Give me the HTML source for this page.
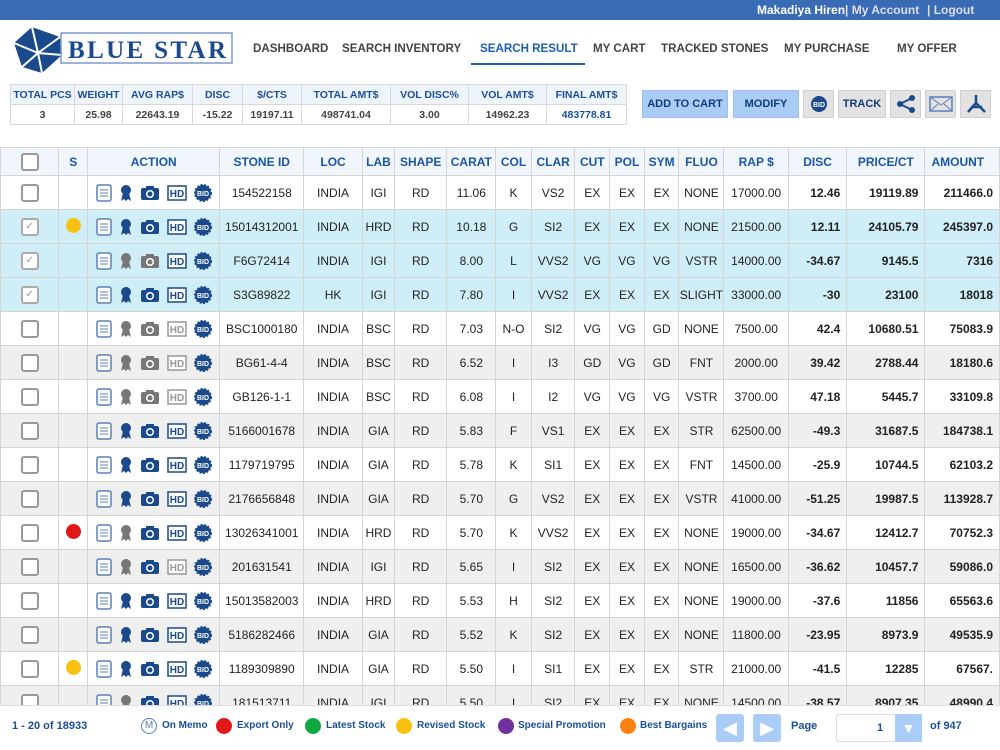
<!DOCTYPE html>
<html><head><meta charset="utf-8"><style>
*{box-sizing:border-box;margin:0;padding:0}
body{width:1000px;height:750px;overflow:hidden;background:#fff;font-family:"Liberation Sans",sans-serif;position:relative;color:#222}
.top{position:absolute;left:0;top:0;width:1000px;height:20px;background:#3a6bb5;color:#fff;font-size:12px;font-weight:bold}
.top span{position:absolute;top:3px}
.nav{position:absolute;top:42px;font-size:11.6px;font-weight:bold;color:#444}
.logo{position:absolute;left:12px;top:25px}
.sum{position:absolute;left:10px;top:84px;border-collapse:collapse;font-size:10.5px;font-weight:bold;table-layout:fixed}
.sum td{border:1px solid #d8d8d8;text-align:center;height:20px;color:#444;white-space:nowrap;overflow:hidden}
.sum tr:first-child td{background:#eef4fc;color:#1a4f9c}
.btn{position:absolute;top:90px;height:28px;font-size:11px;font-weight:bold;color:#123b7a;display:flex;align-items:center;justify-content:center}
.blue{background:#a9cdf6;border:1px solid #9cc0ea}
.gray{background:#e2e2e2;border:1px solid #d0d0d0}
table.g{position:absolute;left:0;top:147px;border-collapse:collapse;table-layout:fixed;font-size:12px}
table.g td{border:1px solid #d4d4d4;height:34px;text-align:center;white-space:nowrap;overflow:hidden}
table.g tr.h td{height:28px;background:#f1f6fd;color:#1a56a8;font-weight:bold;font-size:12px}
tr.w td{background:#fff}tr.e td{background:#efefef}tr.s td{background:#d0eef7}
td.b{font-weight:bold;text-align:right!important;padding-right:6px}
.cb{display:inline-block;width:18px;height:18px;border:2px solid #999;border-radius:3px;vertical-align:middle;background:#fff}
.ck{border-color:#aaa;color:#999;font-size:10px;line-height:14px}
.dot{display:inline-block;width:15px;height:15px;border-radius:50%}
.ic{display:inline-flex;gap:7px;align-items:center;vertical-align:middle}
.foot{position:absolute;top:720px;font-size:10px;font-weight:bold;color:#1a4f9c}
.ld{position:absolute;top:718px;width:16px;height:16px;border-radius:50%}
</style></head><body>
<div class="top"><span style="left:757px">Makadiya Hiren</span><span style="left:845px;color:#dde">| My Account</span><span style="left:927px;color:#dde">| Logout</span></div>
<div class="logo"><svg width="222" height="50"><polygon points="2,18 20,2 48,12 50,30 30,48 10,42" fill="#1b4a8c"/><path d="M20,2 L26,28 L2,18 M26,28 L48,12 M26,28 L50,30 M26,28 L30,48 M26,28 L10,42" stroke="#fff" stroke-width="2" fill="none"/><rect x="49" y="8" width="171" height="30" fill="none" stroke="#7a9ccc" stroke-width="1.5"/><text x="56" y="33" font-family="Liberation Serif" font-size="25" font-weight="bold" fill="#1b4a8c" textLength="158">BLUE STAR</text></svg></div>
<div class="nav" style="left:253px">DASHBOARD</div>
<div class="nav" style="left:342px">SEARCH INVENTORY</div>
<div class="nav" style="left:480px;color:#1a5fb4">SEARCH RESULT</div>
<div style="position:absolute;left:471px;top:63px;width:114px;height:2px;background:#1a5fb4"></div>
<div class="nav" style="left:593px">MY CART</div>
<div class="nav" style="left:661px">TRACKED STONES</div>
<div class="nav" style="left:784px">MY PURCHASE</div>
<div class="nav" style="left:897px">MY OFFER</div>
<table class="sum"><colgroup><col style="width:64px"><col style="width:48px"><col style="width:70px"><col style="width:50px"><col style="width:59px"><col style="width:89px"><col style="width:78px"><col style="width:78px"><col style="width:80px"></colgroup><tr><td>TOTAL PCS</td><td>WEIGHT</td><td>AVG RAP$</td><td>DISC</td><td>$/CTS</td><td>TOTAL AMT$</td><td>VOL DISC%</td><td>VOL AMT$</td><td>FINAL AMT$</td></tr>
<tr><td>3</td><td>25.98</td><td>22643.19</td><td>-15.22</td><td>19197.11</td><td>498741.04</td><td>3.00</td><td>14962.23</td><td style="color:#1a4f9c">483778.81</td></tr></table>
<div class="btn blue" style="left:642px;width:86px">ADD TO CART</div>
<div class="btn blue" style="left:733px;width:66px">MODIFY</div>
<div class="btn gray" style="left:803px;width:31px"><svg width="20" height="20"><circle cx="10" cy="10" r="8" fill="#1b4a8c"/><text x="10" y="13" font-size="7" fill="#fff" text-anchor="middle" font-weight="bold">BID</text></svg></div>
<div class="btn gray" style="left:838px;width:48px">TRACK</div>
<div class="btn gray" style="left:890px;width:31px"><svg width="22" height="20"><circle cx="5" cy="10" r="3" fill="#1b4a8c"/><circle cx="17" cy="4" r="3" fill="#1b4a8c"/><circle cx="17" cy="16" r="3" fill="#1b4a8c"/><path d="M5 10 L17 4 M5 10 L17 16" stroke="#1b4a8c" stroke-width="2"/></svg></div>
<div class="btn gray" style="left:925px;width:31px"><svg width="24" height="16"><rect x="1" y="1" width="22" height="14" fill="none" stroke="#5a80b8" stroke-width="1.5"/><path d="M1 1 L12 9 L23 1 M1 15 L9 8 M23 15 L15 8" stroke="#5a80b8" fill="none"/></svg></div>
<div class="btn gray" style="left:960px;width:31px"><svg width="22" height="22"><path d="M11 2 L11 10 L3 19 M11 10 L20 19 M6 14 L17 14" stroke="#1b4a8c" stroke-width="2.5" fill="none"/></svg></div>
<table class="g" id="g"><colgroup><col style="width:60px"><col style="width:29px"><col style="width:133px"><col style="width:84px"><col style="width:60px"><col style="width:32px"><col style="width:53px"><col style="width:49px"><col style="width:36px"><col style="width:44px"><col style="width:35px"><col style="width:35px"><col style="width:35px"><col style="width:45px"><col style="width:65px"><col style="width:59px"><col style="width:79px"><col style="width:75px"></colgroup>
<tr class="h"><td><span class="cb"></span></td><td>S</td><td>ACTION</td><td>STONE ID</td><td>LOC</td><td>LAB</td><td>SHAPE</td><td>CARAT</td><td>COL</td><td>CLAR</td><td>CUT</td><td>POL</td><td>SYM</td><td>FLUO</td><td>RAP $</td><td>DISC</td><td>PRICE/CT</td><td style="text-align:left;padding-left:6px">AMOUNT</td></tr>
</table>
<script>
var rows=[
["w",0,"",'bbb',"154522158","INDIA","IGI","RD","11.06","K","VS2","EX","EX","EX","NONE","17000.00","12.46","19119.89","211466.0"],
["s",1,"#fcc010",'bbb',"15014312001","INDIA","HRD","RD","10.18","G","SI2","EX","EX","EX","NONE","21500.00","12.11","24105.79","245397.0"],
["s",1,"",'ggb',"F6G72414","INDIA","IGI","RD","8.00","L","VVS2","VG","VG","VG","VSTR","14000.00","-34.67","9145.5","7316"],
["s",1,"",'bbb',"S3G89822","HK","IGI","RD","7.80","I","VVS2","EX","EX","EX","SLIGHT","33000.00","-30","23100","18018"],
["w",0,"",'ggg',"BSC1000180","INDIA","BSC","RD","7.03","N-O","SI2","VG","VG","GD","NONE","7500.00","42.4","10680.51","75083.9"],
["e",0,"",'ggg',"BG61-4-4","INDIA","BSC","RD","6.52","I","I3","GD","VG","GD","FNT","2000.00","39.42","2788.44","18180.6"],
["w",0,"",'ggg',"GB126-1-1","INDIA","BSC","RD","6.08","I","I2","VG","VG","VG","VSTR","3700.00","47.18","5445.7","33109.8"],
["e",0,"",'bbb',"5166001678","INDIA","GIA","RD","5.83","F","VS1","EX","EX","EX","STR","62500.00","-49.3","31687.5","184738.1"],
["w",0,"",'bbb',"1179719795","INDIA","GIA","RD","5.78","K","SI1","EX","EX","EX","FNT","14500.00","-25.9","10744.5","62103.2"],
["e",0,"",'bbb',"2176656848","INDIA","GIA","RD","5.70","G","VS2","EX","EX","EX","VSTR","41000.00","-51.25","19987.5","113928.7"],
["w",0,"#e01818",'gbb',"13026341001","INDIA","HRD","RD","5.70","K","VVS2","EX","EX","EX","NONE","19000.00","-34.67","12412.7","70752.3"],
["e",0,"",'gbg',"201631541","INDIA","IGI","RD","5.65","I","SI2","EX","EX","EX","NONE","16500.00","-36.62","10457.7","59086.0"],
["w",0,"",'bbb',"15013582003","INDIA","HRD","RD","5.53","H","SI2","EX","EX","EX","NONE","19000.00","-37.6","11856","65563.6"],
["e",0,"",'bbb',"5186282466","INDIA","GIA","RD","5.52","K","SI2","EX","EX","EX","NONE","11800.00","-23.95","8973.9","49535.9"],
["w",0,"#fcc010",'bbb',"1189309890","INDIA","GIA","RD","5.50","I","SI1","EX","EX","EX","STR","21000.00","-41.5","12285","67567."],
["e",0,"",'gbb',"181513711","INDIA","IGI","RD","5.50","I","SI2","EX","EX","EX","NONE","14500.00","-38.57","8907.35","48990.4"]];
function ic(f){var b="#1b4a8c",g="#777";var r=f[0]=="b"?b:g,c=f[1]=="b"?b:g,h=f[2]=="b"?"#1b4a8c":"#999";
return '<span class="ic"><svg width="16" height="18"><rect x="1" y="1" width="14" height="16" rx="2" fill="#fff" stroke="#5a80b8" stroke-width="1.5"/><path d="M4 6h8M4 9h8M4 12h8" stroke="#5a80b8"/></svg>'+
'<svg width="14" height="18"><circle cx="7" cy="6" r="5" fill="'+r+'"/><path d="M4 9 L2 17 L5 15 L7 17 L9 15 L12 17 L10 9Z" fill="'+r+'"/></svg>'+
'<svg width="20" height="16"><rect x="1" y="3" width="18" height="12" rx="2" fill="'+c+'"/><rect x="6" y="1" width="8" height="4" fill="'+c+'"/><circle cx="10" cy="9" r="4" fill="#fff"/><circle cx="10" cy="9" r="2.5" fill="'+c+'"/></svg>'+
'<svg width="20" height="16"><rect x="1" y="1" width="18" height="14" fill="#fff" stroke="'+h+'" stroke-width="1.5"/><text x="10" y="12" font-size="10" font-weight="bold" fill="'+h+'" text-anchor="middle">HD</text></svg>'+
'<svg width="18" height="18"><circle cx="9" cy="9" r="8" fill="#1b4a8c" stroke="#1b4a8c" stroke-dasharray="2 1.5" stroke-width="2"/><text x="9" y="12" font-size="7" font-weight="bold" fill="#fff" text-anchor="middle">BID</text></svg></span>';}
var h="";rows.forEach(function(r){h+='<tr class="'+r[0]+'"><td><span class="cb'+(r[1]?' ck':'')+'">'+(r[1]?'✓':'')+'</span></td><td>'+(r[2]?'<span class="dot" style="background:'+r[2]+'"></span>':'')+'</td><td>'+ic(r[3])+'</td>';
for(var i=4;i<19;i++){var cls=i>=16?' class="b"':'';h+='<td'+cls+'>'+r[i]+'</td>';}h+='</tr>';});
document.getElementById('g').insertAdjacentHTML('beforeend',h);
</script>
<div style="position:absolute;left:0;top:705px;width:1000px;height:45px;background:#fff;border-top:1px solid #ddd"></div>
<div class="foot" style="left:12px;font-size:11px">1 - 20 of 18933</div>
<div class="ld" style="left:141px;border:1.5px solid #5a80b8;color:#5a80b8;font-size:10px;text-align:center;line-height:13px">M</div><div class="foot" style="left:162px">On Memo</div>
<div class="ld" style="left:216px;background:#e01818"></div><div class="foot" style="left:237px">Export Only</div>
<div class="ld" style="left:305px;background:#10a840"></div><div class="foot" style="left:326px">Latest Stock</div>
<div class="ld" style="left:396px;background:#fcc010"></div><div class="foot" style="left:417px">Revised Stock</div>
<div class="ld" style="left:498px;background:#7030a0"></div><div class="foot" style="left:518px">Special Promotion</div>
<div class="ld" style="left:620px;background:#ff8010"></div><div class="foot" style="left:640px">Best Bargains</div>
<div style="position:absolute;left:716px;top:714px;width:28px;height:28px;background:#a9cdf6;border-radius:3px;color:#fff;font-size:18px;text-align:center;line-height:28px">◀</div>
<div style="position:absolute;left:753px;top:714px;width:28px;height:28px;background:#a9cdf6;border-radius:3px;color:#fff;font-size:18px;text-align:center;line-height:28px">▶</div>
<div class="foot" style="left:791px;font-size:11px">Page</div>
<div style="position:absolute;left:836px;top:714px;width:86px;height:28px;border:1px solid #ddd;border-radius:3px;font-size:11px;font-weight:bold;color:#1a4f9c;padding:7px 0 0 40px">1</div>
<div style="position:absolute;left:895px;top:714px;width:27px;height:28px;background:#a9cdf6;color:#fff;text-align:center;line-height:28px;font-size:14px">▼</div>
<div class="foot" style="left:930px;font-size:11px">of 947</div>
</body></html>
